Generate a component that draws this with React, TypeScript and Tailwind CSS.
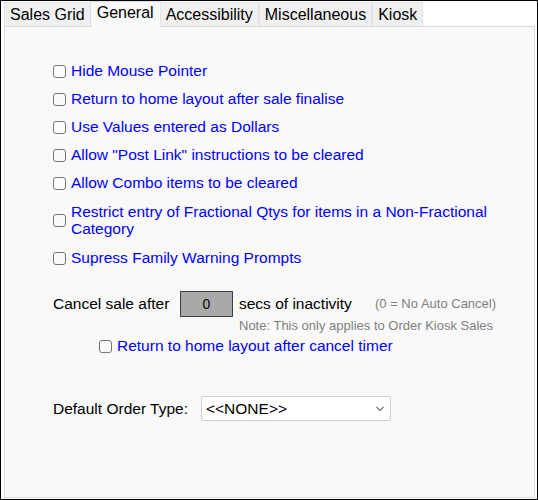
import React from "react";

const F = { fontFamily: '"Liberation Sans", Arial, sans-serif' };

function Box() {
  return (
    <span className="inline-block w-[13px] h-[13px] rounded-[3px] border border-[#767676] bg-[#fafafa] shrink-0" />
  );
}

function Check({ label, className = "" }: { label: React.ReactNode; className?: string }) {
  return (
    <div className={"flex items-center gap-[5px] " + className}>
      <Box />
      <span className="text-[#0000ff] text-[15.5px] leading-[18px]">{label}</span>
    </div>
  );
}

export default function App() {
  const tabs = ["Sales Grid", "General", "Accessibility", "Miscellaneous", "Kiosk"];
  return (
    <div
      style={F}
      className="w-[538px] h-[500px] border border-black bg-white pl-[3px] pr-[2px] pb-[1px] flex flex-col text-black"
    >
      <div className="flex h-[25px] items-end relative z-10">
        {tabs.map((t) => {
          const sel = t === "General";
          return sel ? (
            <div
              key={t}
              className="h-[26px] -mb-[1px] px-[6px] pt-[1px] bg-[#f9f9f9] border border-b-0 border-[#dcdcdc] text-[16px] leading-[20px] -mx-[1px]"
            >
              {t}
            </div>
          ) : (
            <div
              key={t}
              className="h-[24px] px-[5px] bg-[#f0f0f0] border border-b-0 border-[#e3e3e3] text-[16px] leading-[23px]"
            >
              {t}
            </div>
          );
        })}
      </div>
      <div className="flex-1 bg-[#f9f9f9] border border-[#dcdcdc] pl-[48px] pt-[35px]">
        <div className="flex flex-col gap-[10px]">
          <Check label="Hide Mouse Pointer" />
          <Check label="Return to home layout after sale finalise" />
          <Check label="Use Values entered as Dollars" />
          <Check label={'Allow "Post Link" instructions to be cleared'} />
          <Check label="Allow Combo items to be cleared" />
          <div className="flex items-center gap-[5px] mt-[1px] mb-[2px]">
            <Box />
            <span className="text-[#0000ff] text-[15.5px] leading-[17px] w-[430px]">
              Restrict entry of Fractional Qtys for items in a Non-Fractional Category
            </span>
          </div>
          <Check label="Supress Family Warning Prompts" />
        </div>

        <div className="mt-[24px] flex items-center">
          <span className="text-[15.5px] leading-[18px] w-[127px]">Cancel sale after</span>
          <div className="w-[53px] h-[26px] bg-[#a9a9a9] border border-[#3f3f3f] flex items-center justify-center text-[14px]">
            0
          </div>
          <span className="text-[15.5px] leading-[18px] ml-[6px] w-[136px]">secs of inactivity</span>
          <span className="text-[13px] text-[#808080]">(0 = No Auto Cancel)</span>
        </div>
        <div className="ml-[186px] mt-[1px] text-[13px] leading-[15px] text-[#808080]">
          Note: This only applies to Order Kiosk Sales
        </div>
        <Check className="ml-[46px] mt-[4px]" label="Return to home layout after cancel timer" />

        <div className="mt-[41px] flex items-center">
          <span className="text-[15.5px] leading-[18px] w-[148px]">Default Order Type:</span>
          <div className="w-[190px] h-[25px] bg-white border border-[#cfcfcf] rounded-[2px] flex items-center justify-between pl-[4px] pr-[4px]">
            <span className="text-[15.5px]">&lt;&lt;NONE&gt;&gt;</span>
            <svg width="10" height="6" viewBox="0 0 10 6" className="mr-[1px]">
              <path d="M1.5 1 L5 4.5 L8.5 1" fill="none" stroke="#6a6a6a" strokeWidth="1.1" />
            </svg>
          </div>
        </div>
      </div>
    </div>
  );
}
